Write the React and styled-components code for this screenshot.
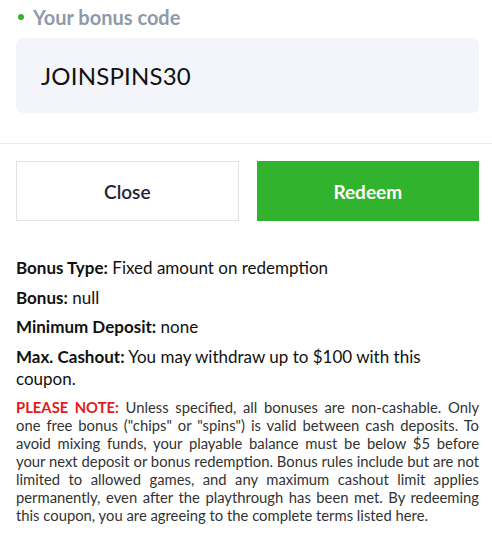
import React from 'react';
import styled, { createGlobalStyle } from 'styled-components';

const GlobalStyle = createGlobalStyle`
	body {
		margin: 0;
		background: #fff;
		font-family: Lato, "Liberation Sans", sans-serif;
	}
`;

const Wrapper = styled.div`
	width: 492px;
`;

const CodeSection = styled.div`
	padding: 4px 13px 30px 16px;
	border-bottom: 1px solid #e6e9f0;
`;

const Title = styled.div`
	display: flex;
	align-items: center;
	gap: 9px;
	font-size: 20px;
	font-weight: 700;
	color: #8e99aa;
	line-height: 26px;
	margin-bottom: 8px;
	&::before {
		content: '';
		width: 6px;
		height: 6px;
		border-radius: 50%;
		background: #32b32e;
		margin-left: 2px;
	}
`;

const CodeBox = styled.div`
	background: #f3f5fa;
	border-radius: 7px;
	height: 75px;
	display: flex;
	align-items: center;
	padding-left: 25px;
	font-size: 24px;
	color: #111;
	letter-spacing: 0.2px;
`;

const Buttons = styled.div`
	display: grid;
	grid-template-columns: 1fr 1fr;
	gap: 18px;
	padding: 17px 13px 0 16px;
`;

const Button = styled.button`
	height: 60px;
	font-family: Lato, "Liberation Sans", sans-serif;
	font-size: 19px;
	font-weight: ${({ primary }) => (primary ? 700 : 600)};
	border: 1px solid ${({ primary }) => (primary ? '#32b32e' : '#e2e2e2')};
	background: ${({ primary }) => (primary ? '#32b32e' : '#fff')};
	color: ${({ primary }) => (primary ? '#fff' : '#22233a')};
	cursor: pointer;
`;

const Details = styled.div`
	padding: 36px 13px 0 16px;
	color: #111;
	font-size: 17px;
`;

const Row = styled.div`
	line-height: 22px;
	margin-bottom: 7.5px;
	& > b {
		font-weight: 700;
	}
`;

const Note = styled.p`
	margin: 0;
	font-size: 14.8px;
	line-height: 18px;
	padding-top: 1px;
	text-align: justify;
	color: #333;
	& > b {
		color: #e21b1b;
		font-weight: 700;
	}
`;

export default function App() {
	return (
		<Wrapper>
			<GlobalStyle />
			<CodeSection>
				<Title>Your bonus code</Title>
				<CodeBox>JOINSPINS30</CodeBox>
			</CodeSection>
			<Buttons>
				<Button>Close</Button>
				<Button primary>Redeem</Button>
			</Buttons>
			<Details>
				<Row><b>Bonus Type:</b> Fixed amount on redemption</Row>
				<Row><b>Bonus:</b> null</Row>
				<Row><b>Minimum Deposit:</b> none</Row>
				<Row><b>Max. Cashout:</b> You may withdraw up to $100 with this coupon.</Row>
				<Note>
					<b>PLEASE NOTE:</b> Unless specified, all bonuses are non-cashable. Only one free bonus ("chips" or "spins") is valid between cash deposits. To avoid mixing funds, your playable balance must be below $5 before your next deposit or bonus redemption. Bonus rules include but are not limited to allowed games, and any maximum cashout limit applies permanently, even after the playthrough has been met. By redeeming this coupon, you are agreeing to the complete terms listed here.
				</Note>
			</Details>
		</Wrapper>
	);
}
